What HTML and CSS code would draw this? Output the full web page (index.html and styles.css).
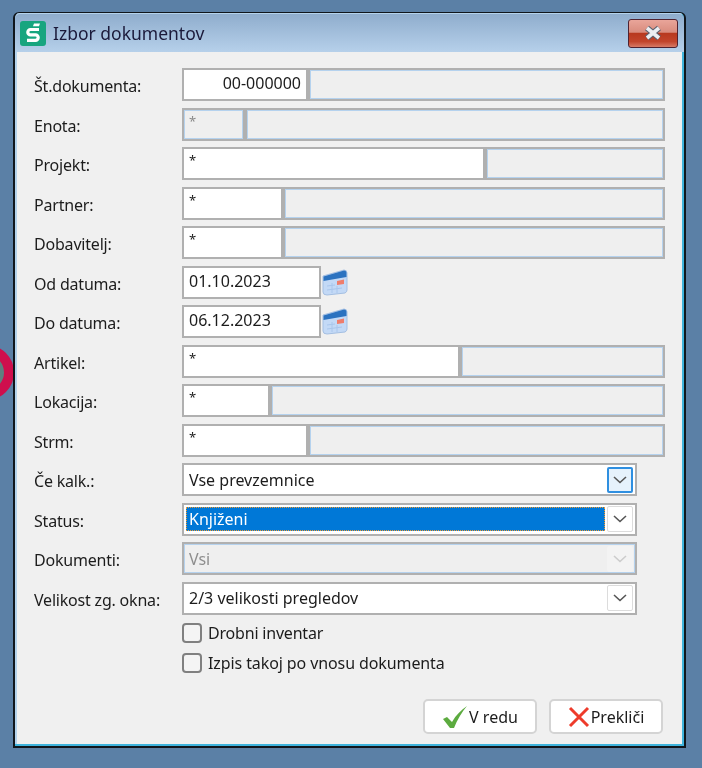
FILE: index.html
```html
<!DOCTYPE html>
<html lang="sl">
<head>
<meta charset="utf-8">
<title>Izbor dokumentov</title>
<link rel="stylesheet" href="styles.css">
</head>
<body>
<div class="ring"></div>
<div class="window">
  <header class="titlebar">
    <svg class="app-icon" width="26" height="25" viewBox="0 0 26 25"><rect width="26" height="25" rx="3" fill="#17a57f"/><path d="M19 8.5H10.5a2.7 2.7 0 0 0 0 5.4h5a2.7 2.7 0 0 1 0 5.4H7" fill="none" stroke="#fff" stroke-width="3.2"/><path d="M14 2.5h6l-1 2.8h-6z" fill="#fff"/></svg>
    <span class="title">Izbor dokumentov</span>
    <button class="close"><svg width="24" height="16" viewBox="0 0 24 16"><path d="M6 3l12 10M18 3L6 13" stroke="#5a6170" stroke-width="6"/><path d="M6 3l12 10M18 3L6 13" stroke="#eceef2" stroke-width="3.6"/></svg></button>
  </header>
  <main class="client">
    <div class="rows">
      <div class="row"><span class="label">Št.dokumenta:</span><div class="field w126 right">00-000000</div><div class="fill"></div></div>
      <div class="row"><span class="label">Enota:</span><div class="fill w63 muted star">*</div><div class="fill"></div></div>
      <div class="row"><span class="label">Projekt:</span><div class="field w303 star">*</div><div class="fill"></div></div>
      <div class="row"><span class="label">Partner:</span><div class="field w101 star">*</div><div class="fill"></div></div>
      <div class="row"><span class="label">Dobavitelj:</span><div class="field w101 star">*</div><div class="fill"></div></div>
      <div class="row"><span class="label">Od datuma:</span><div class="field w139">01.10.2023</div>
        <svg class="cal" width="26" height="27" viewBox="0 0 26 27"><use href="#cal"/></svg></div>
      <div class="row"><span class="label">Do datuma:</span><div class="field w139">06.12.2023</div>
        <svg class="cal" width="26" height="27" viewBox="0 0 26 27"><defs><g id="cal"><path d="M1 7L22 1q3 0 3 3v17q0 2-2 3L5 26q-4 0-4-3z" fill="#c3d9f6" stroke="#a4bfe2"/><path d="M1.500 7.500L22 1.500q2.500 0 2.500 2.500v4L1.500 12z" fill="#2b72c0"/><path d="M15 12l7-1.500v4.500l-7 1z" fill="#ee7d6c"/><path d="M5 17l8-1M5 21l15-2M10 14v10M15 17v7" stroke="#a9c6ec"/></g></defs><use href="#cal"/></svg></div>
      <div class="row"><span class="label">Artikel:</span><div class="field w278 star">*</div><div class="fill"></div></div>
      <div class="row"><span class="label">Lokacija:</span><div class="field w88 star">*</div><div class="fill"></div></div>
      <div class="row"><span class="label">Strm:</span><div class="field w126 star">*</div><div class="fill"></div></div>
      <div class="row"><span class="label">Če kalk.:</span><div class="select"><span class="value">Vse prevzemnice</span><span class="drop hot"><svg width="14" height="8" viewBox="0 0 14 8"><path d="M1 1l6 5.5L13 1" fill="none" stroke="#555" stroke-width="1.6"/></svg></span></div></div>
      <div class="row"><span class="label">Status:</span><div class="select"><span class="value selected">Knjiženi</span><span class="drop"><svg width="14" height="8" viewBox="0 0 14 8"><path d="M1 1l6 5.5L13 1" fill="none" stroke="#555" stroke-width="1.6"/></svg></span></div></div>
      <div class="row"><span class="label">Dokumenti:</span><div class="select disabled"><span class="value">Vsi</span><span class="drop"><svg width="14" height="8" viewBox="0 0 14 8"><path d="M1 1l6 5.5L13 1" fill="none" stroke="#ccc" stroke-width="1.6"/></svg></span></div></div>
      <div class="row"><span class="label">Velikost zg. okna:</span><div class="select"><span class="value">2/3 velikosti pregledov</span><span class="drop"><svg width="14" height="8" viewBox="0 0 14 8"><path d="M1 1l6 5.5L13 1" fill="none" stroke="#555" stroke-width="1.6"/></svg></span></div></div>
    </div>
    <div class="checks">
      <label class="check"><span class="box"></span>Drobni inventar</label>
      <label class="check"><span class="box"></span><span class="wide">Izpis takoj po vnosu dokumenta</span></label>
    </div>
    <footer class="actions">
      <button class="btn"><svg width="26" height="24" viewBox="0 0 26 24"><path d="M1 14l4-2 5 5C14 10 19 5 25 1c-5 6-10 14-13 22H8z" fill="#5cab3f"/></svg>V redu</button>
      <button class="btn"><svg width="22" height="22" viewBox="0 0 22 22"><path d="M2 2l18 18M20 2L2 20" stroke="#ee3b2b" stroke-width="3"/></svg>Prekliči</button>
    </footer>
  </main>
</div>
</body>
</html>
```
FILE: styles.css
```css
* { box-sizing: border-box; }
html, body { margin: 0; height: 768px; overflow: hidden; }
body {
  background: #5b80a6;
  font-family: "Noto Sans", "Open Sans", sans-serif;
  font-size: 16px;
  color: #1c1c1c;
  padding: 12px 0 0 13px;
  position: relative;
}
.ring {
  position: absolute;
  left: -41px;
  top: 345px;
  width: 55px;
  height: 55px;
  border: 10px solid #cf0f4d;
  border-radius: 50%;
  background: #5f7f80;
}
.window {
  position: relative;
  width: 673px;
  height: 736px;
  display: flex;
  flex-direction: column;
  border: 2px solid #10161c;
  border-top-width: 1px;
  border-radius: 6px 6px 0 0;
  background: #b4d3ec;
  padding: 1px 2px 2px 2px;
  box-shadow: inset -2px -2px 0 #3fb4dc;
  filter: blur(0.5px);
}
.titlebar {
  height: 38px;
  display: flex;
  align-items: center;
  margin: 0 -2px;
  padding: 0 6px 0 5px;
  background: linear-gradient(#8fadcd, #b6d0ea);
  border-radius: 5px 5px 0 0;
  flex: none;
}
.app-icon { flex: none; }
.title { margin-left: 7px; flex: 1; font-size: 17.5px; color: #1b1a3a; }
.close {
  width: 50px;
  height: 29px;
  padding: 0;
  display: flex;
  align-items: center;
  justify-content: center;
  border: 1px solid #4f2230;
  border-radius: 3px;
  background: linear-gradient(#e9a59a 0, #d98c7e 45%, #b8391f 50%, #c2452c 80%, #d77a66 100%);
}
.client {
  flex: 1;
  background: #f0f0f0;
  padding-top: 16px;
  display: flex;
  flex-direction: column;
}
.rows {
  display: flex;
  flex-direction: column;
  gap: 6.5px;
  padding: 0 17px 0 17px;
}
.row { display: flex; align-items: stretch; height: 33px; }
.label { width: 148px; flex: none; line-height: 37.5px; letter-spacing: -0.2px; white-space: nowrap; }
.field, .fill {
  border: 2px solid #b0b0b0;
  padding: 0 5px;
  line-height: 27px;
  flex: none;
  white-space: nowrap;
}
.field { background: #fff; }
.fill {
  flex: 1;
  background: #efefef;
  box-shadow: inset 0 0 0 1px #b5d2ee;
}
.fill.w63 { flex: none; }
.star { font-size: 13px; line-height: 22px; }
.muted { color: #8a8a8a; }
.right { text-align: right; }
.w63 { width: 63px; }
.w88 { width: 88px; }
.w101 { width: 101px; }
.w126 { width: 126px; }
.w139 { width: 139px; }
.w278 { width: 278px; }
.w303 { width: 303px; }
.cal { margin: 0 0 0 1px; align-self: center; flex: none; }
.select {
  width: 455px;
  flex: none;
  display: flex;
  align-items: center;
  border: 2px solid #b0b0b0;
  background: #fff;
  padding: 0 2px;
}
.value {
  flex: 1;
  height: 24px;
  line-height: 25px;
  padding: 0 3px;
  margin-right: 2px;
  white-space: nowrap;
}
.selected {
  background: #0078d7;
  color: #fff;
  outline: 1px dotted #f29a2e;
  outline-offset: -1px;
}
.drop {
  width: 26px;
  height: 26px;
  flex: none;
  display: flex;
  align-items: center;
  justify-content: center;
  border: 1px solid #dcdcdc;
  border-radius: 2px;
  background: #fff;
}
.drop.hot { border: 2px solid #2f8fe0; background: #e6f2fc; }
.disabled { background: #efefef; box-shadow: inset 0 0 0 1px #b5d2ee; color: #8e8e8e; }
.disabled .drop { background: #f3f3f3; border-color: #f3f3f3; }
.checks {
  display: flex;
  flex-direction: column;
  gap: 10px;
  margin: 8px 0 0 165px;
}
.check { display: flex; align-items: center; height: 20px; gap: 6px; letter-spacing: -0.2px; }
.wide { letter-spacing: -0.1px; }
.box {
  width: 20px;
  height: 20px;
  border: 2px solid #808080;
  border-radius: 4px;
  background: #f4f4f4;
  flex: none;
}
.actions {
  margin-top: auto;
  padding: 0 19px 10px 0;
  display: flex;
  justify-content: flex-end;
  gap: 12px;
}
.btn {
  width: 114px;
  height: 35px;
  padding: 0;
  display: flex;
  align-items: center;
  justify-content: center;
  gap: 1px;
  border: 2px solid #d4d4d4;
  border-radius: 5px;
  background: #fff;
  font: inherit;
  color: #1c1c1c;
}
```
